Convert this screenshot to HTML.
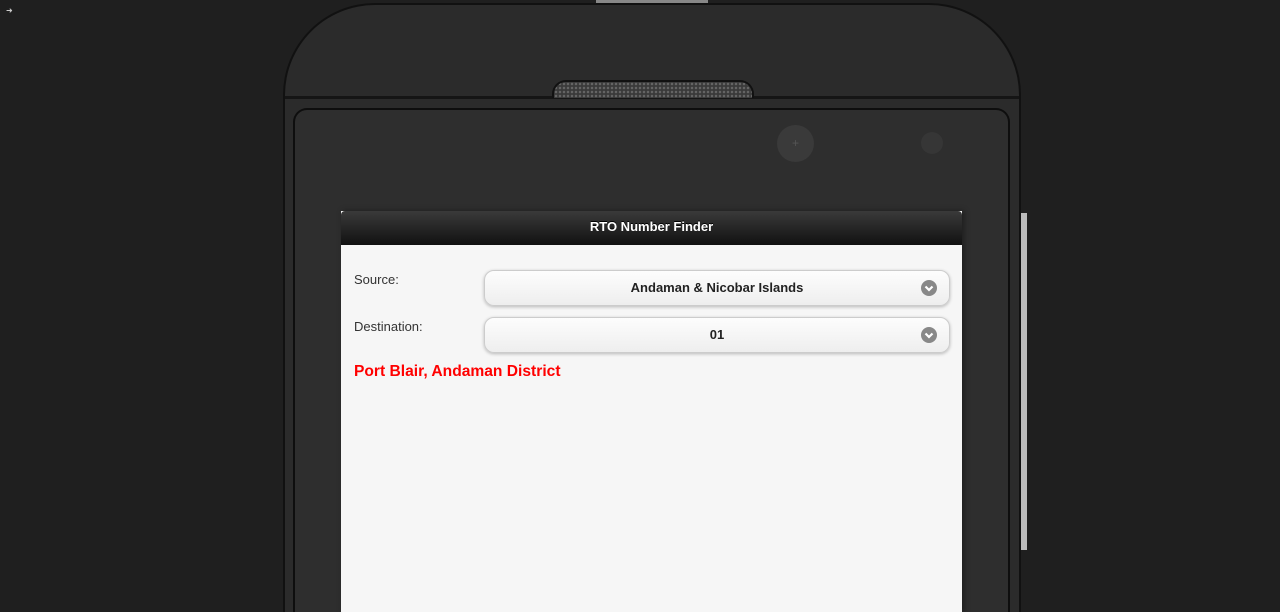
<!DOCTYPE html>
<html style="overflow:hidden;width:1280px;height:612px"><head><style>
html,body{margin:0;width:1280px;height:612px;overflow:hidden}
body{background:#1f1f1f;position:relative;font-family:"Liberation Sans",sans-serif}
.abs{position:absolute}
.phone{left:283px;top:3px;width:738px;height:609px;background:#2b2b2b;border:2px solid #111;border-bottom:none;border-radius:92px 92px 0 0;box-sizing:border-box}
.topline{left:285px;top:96px;width:734px;height:3px;background:#151515}
.frame{left:293px;top:108px;width:717px;height:504px;background:#2e2e2e;border:2px solid #0e0e0e;border-bottom:none;border-radius:14px 14px 0 0;box-sizing:border-box}
.speaker{left:552px;top:80px;width:198px;height:16px;background:repeating-radial-gradient(circle at 2px 2px,#666 0 1px,#3a3a3a 1.5px 3px);background-size:4px 4px;border:2px solid #111;border-bottom:none;border-radius:14px 14px 0 0}
.topbtn{left:596px;top:0;width:112px;height:3px;background:#888}
.side{left:1021px;top:213px;width:6px;height:337px;background:#bbb}
.cam{left:777px;top:125px;width:37px;height:37px;border-radius:50%;background:#3a3a3a;color:#555;text-align:center;line-height:37px;font-size:12px}
.sens{left:921px;top:132px;width:22px;height:22px;border-radius:50%;background:#363636}
.screen{left:341px;top:211px;width:621px;height:401px;background:#f6f6f6;box-shadow:2px 0 6px rgba(0,0,0,.4)}
.hdr{left:0;top:0;width:621px;height:34px;background:linear-gradient(#3a3a3a,#111);color:#fff;font-weight:bold;font-size:13px;text-align:center;line-height:31px;border-radius:4px 4px 0 0;text-shadow:0 -1px #000}
.lbl{color:#333;font-size:13px;left:13px}
.sel{left:143px;width:464px;height:34px;border:1px solid #ccc;border-radius:10px;background:linear-gradient(#fdfdfd,#eee);box-shadow:0 1px 3px rgba(0,0,0,.25);text-align:center;line-height:34px;font-weight:bold;font-size:13px;color:#222}
.ic{position:absolute;right:12px;top:9px;width:16px;height:16px;border-radius:50%;background:#888}
.ic svg{display:block}
.res{left:13px;top:152px;color:#f00;font-weight:bold;font-size:15.6px}
</style></head><body>
<div class="abs" style="left:6px;top:6px;width:10px;height:8px;color:#ccc;font-size:8px">➜</div>
<div class="abs topbtn"></div>
<div class="abs phone"></div>
<div class="abs topline"></div>
<div class="abs speaker"></div>
<div class="abs frame"></div>
<div class="abs side"></div>
<div class="abs cam">+</div>
<div class="abs sens"></div>
<div class="abs screen">
<div class="abs hdr">RTO Number Finder</div>
<div class="abs lbl" style="top:61px">Source:</div>
<div class="abs lbl" style="top:108px">Destination:</div>
<div class="abs sel" style="top:59px">Andaman &amp; Nicobar Islands<span class="ic"><svg width="16" height="16"><path d="M4.5 6.5L8 10l3.5-3.5" stroke="#fff" stroke-width="2.2" fill="none"/></svg></span></div>
<div class="abs sel" style="top:106px">01<span class="ic"><svg width="16" height="16"><path d="M4.5 6.5L8 10l3.5-3.5" stroke="#fff" stroke-width="2.2" fill="none"/></svg></span></div>
<div class="abs res">Port Blair, Andaman District</div>
</div>
</body></html>
